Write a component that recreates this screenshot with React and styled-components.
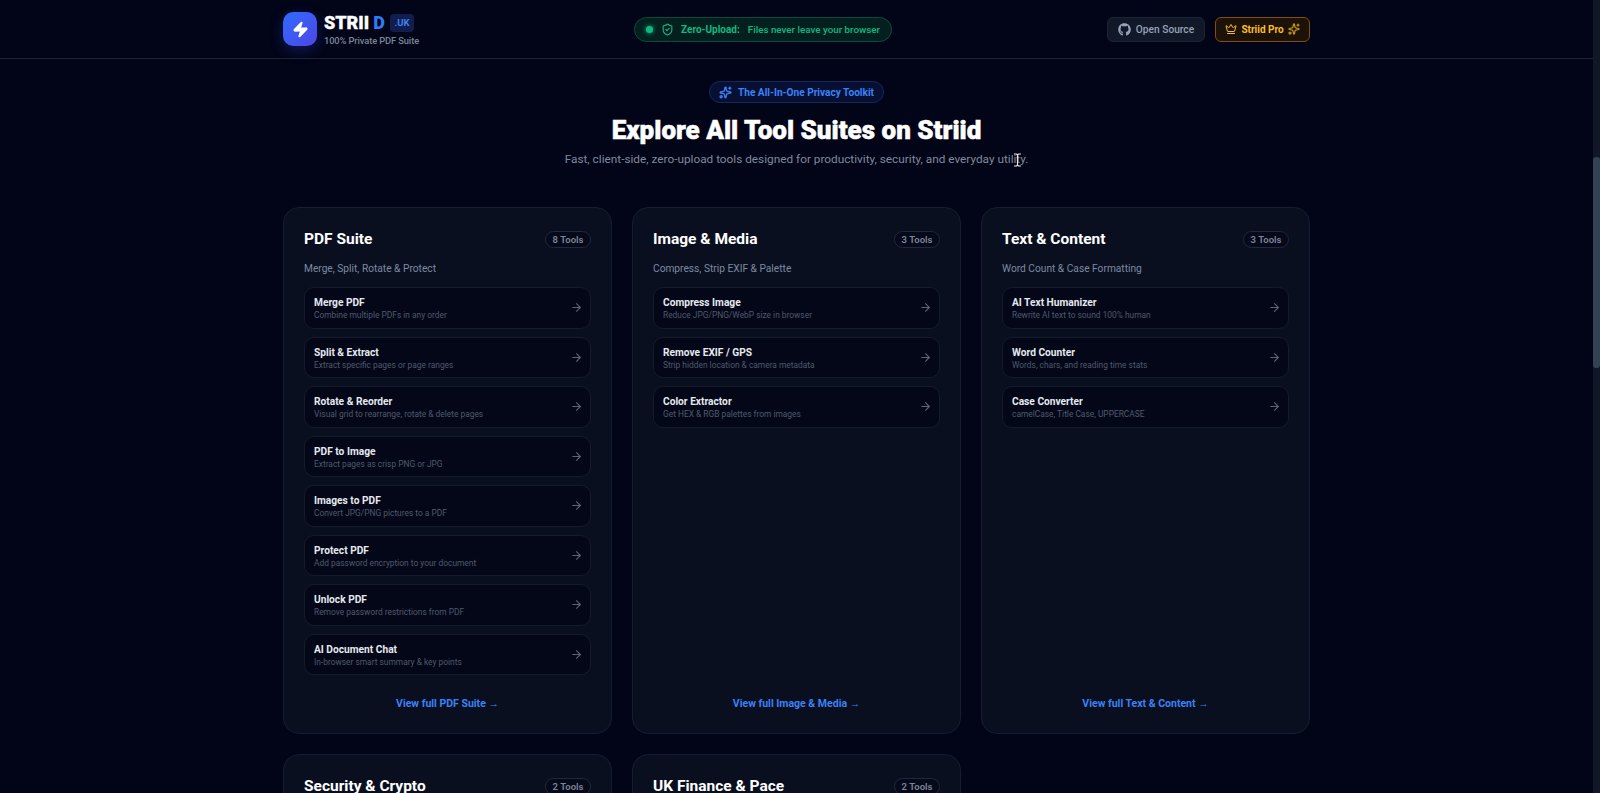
import React from 'react';
import styled, { createGlobalStyle } from 'styled-components';
import { ArrowRight, Crown, ShieldCheck, Sparkles, Zap } from 'lucide-react';
import { FaGithub } from 'react-icons/fa';

const suites = [
  {
    title: 'PDF Suite',
    count: '8 Tools',
    desc: 'Merge, Split, Rotate & Protect',
    link: 'View full PDF Suite →',
    tools: [
      ['Merge PDF', 'Combine multiple PDFs in any order'],
      ['Split & Extract', 'Extract specific pages or page ranges'],
      ['Rotate & Reorder', 'Visual grid to rearrange, rotate & delete pages'],
      ['PDF to Image', 'Extract pages as crisp PNG or JPG'],
      ['Images to PDF', 'Convert JPG/PNG pictures to a PDF'],
      ['Protect PDF', 'Add password encryption to your document'],
      ['Unlock PDF', 'Remove password restrictions from PDF'],
      ['AI Document Chat', 'In-browser smart summary & key points'],
    ],
  },
  {
    title: 'Image & Media',
    count: '3 Tools',
    desc: 'Compress, Strip EXIF & Palette',
    link: 'View full Image & Media →',
    tools: [
      ['Compress Image', 'Reduce JPG/PNG/WebP size in browser'],
      ['Remove EXIF / GPS', 'Strip hidden location & camera metadata'],
      ['Color Extractor', 'Get HEX & RGB palettes from images'],
    ],
  },
  {
    title: 'Text & Content',
    count: '3 Tools',
    desc: 'Word Count & Case Formatting',
    link: 'View full Text & Content →',
    tools: [
      ['AI Text Humanizer', 'Rewrite AI text to sound 100% human'],
      ['Word Counter', 'Words, chars, and reading time stats'],
      ['Case Converter', 'camelCase, Title Case, UPPERCASE'],
    ],
  },
];

const lowerSuites = [
  { title: 'Security & Crypto', count: '2 Tools' },
  { title: 'UK Finance & Pace', count: '2 Tools' },
];

const GlobalStyle = createGlobalStyle`
  html, body {
    margin: 0;
    height: 100%;
    overflow: hidden;
    background: #020417;
  }
  body {
    font-family: Roboto, "Noto Sans", Arial, sans-serif;
    color: #fff;
  }
`;

const Shell = styled.div`
  display: flex;
  height: 793px;
  overflow: hidden;
`;

const Page = styled.div`
  flex: 1;
  min-width: 0;
  height: 793px;
  overflow: hidden;
`;

const ScrollTrack = styled.div`
  width: 7px;
  flex: none;
  background: #111726;
  padding-top: 157px;
`;

const ScrollThumb = styled.div`
  height: 211px;
  border-radius: 3px;
  background: #334155;
`;

const Header = styled.header`
  height: 59px;
  box-sizing: border-box;
  border-bottom: 1px solid #1c2133;
  display: flex;
  justify-content: center;
`;

const HeaderInner = styled.div`
  width: 1027px;
  display: flex;
  justify-content: space-between;
  align-items: center;
`;

const Brand = styled.div`
  display: flex;
  align-items: center;
  gap: 7px;
`;

const LogoMark = styled.div`
  width: 34px;
  height: 34px;
  border-radius: 10px;
  background: linear-gradient(135deg, #2f6bff, #4f46e5);
  box-shadow: 0 4px 14px rgba(47, 84, 235, 0.3);
  display: flex;
  align-items: center;
  justify-content: center;
  color: #fff;
`;

const BrandText = styled.div`
  display: flex;
  flex-direction: column;
  gap: 3px;
  padding-top: 2px;
`;

const BrandRow = styled.div`
  display: flex;
  align-items: center;
  height: 19px;
`;

const BrandName = styled.span`
  font-size: 18px;
  font-weight: 900;
  line-height: 19px;
  color: #fff;
  -webkit-text-stroke: 0.3px #fff;
`;

const BrandAccent = styled.span`
  font-size: 18px;
  font-weight: 900;
  line-height: 19px;
  color: #2f7bf6;
  margin-left: 4px;
`;

const TldBadge = styled.span`
  margin-left: 5px;
  width: 24px;
  height: 18px;
  border-radius: 4px;
  background: #111d4d;
  color: #3b82f6;
  font-size: 9.5px;
  font-weight: 700;
  display: flex;
  align-items: center;
  justify-content: center;
`;

const BrandSub = styled.span`
  font-size: 9.3px;
  font-weight: 500;
  line-height: 12px;
  letter-spacing: -0.1px;
  color: #7c8698;
`;

const PrivacyPill = styled.div`
  height: 25px;
  width: 258px;
  box-sizing: border-box;
  padding-left: 11px;
  border: 1px solid #064e3b;
  border-radius: 13px;
  background: #03201f;
  display: flex;
  align-items: center;
  gap: 7px;
  font-size: 10px;
  font-weight: 500;
  color: #10b981;
  white-space: nowrap;
`;

const Dot = styled.span`
  width: 7px;
  height: 7px;
  border-radius: 50%;
  background: #10b981;
  box-shadow: 0 0 5px #10b981;
  margin-right: 1px;
`;

const PillStrong = styled.strong`
  font-weight: 700;
  margin-right: 1px;
`;

const PillNote = styled.span`
  font-size: 9.8px;
`;

const Actions = styled.div`
  display: flex;
  justify-content: flex-end;
  gap: 10px;
`;

const SourceButton = styled.button`
  height: 25px;
  width: 98px;
  padding: 0;
  border: 1px solid #1a2436;
  border-radius: 6px;
  background: #111827;
  color: #94a3b8;
  font: 500 10.2px Roboto, sans-serif;
  display: flex;
  align-items: center;
  justify-content: center;
  gap: 5px;
`;

const ProButton = styled(SourceButton)`
  width: 95px;
  border-color: #854d0e;
  background: #1c1208;
  color: #fbbf24;
  font-size: 10px;
  font-weight: 700;
  gap: 4px;
`;

const ProSpark = styled(Sparkles)`
  opacity: 0.75;
`;

const Main = styled.main`
  width: 1027px;
  margin: 0 auto;
`;

const Hero = styled.section`
  display: flex;
  flex-direction: column;
  align-items: center;
  padding-top: 22px;
`;

const Eyebrow = styled.div`
  height: 22px;
  width: 175px;
  box-sizing: border-box;
  padding-left: 9px;
  border: 1px solid #14285c;
  border-radius: 11px;
  background: #071033;
  color: #3b82f6;
  font-size: 10.1px;
  font-weight: 700;
  white-space: nowrap;
  display: flex;
  align-items: center;
  gap: 6px;
`;

const HeroTitle = styled.h1`
  margin: 11px 0 0;
  font-size: 26px;
  font-weight: 900;
  line-height: 32px;
  color: #fff;
  -webkit-text-stroke: 0.5px #fff;
`;

const HeroSub = styled.p`
  position: relative;
  margin: 4px 0 0;
  font-size: 11.8px;
  line-height: 18px;
  color: #7f8a9e;
`;

const TextCursor = styled.svg`
  position: absolute;
  right: 6px;
  top: 3px;
`;

const Grid = styled.div`
  display: grid;
  grid-template-columns: repeat(3, 1fr);
  gap: 20px;
  margin-top: 39px;
`;

const Card = styled.article`
  box-sizing: border-box;
  height: ${p => (p.$open ? '100px' : '527px')};
  padding: 20px;
  border: 1px solid #161d30;
  border-radius: 16px;
  background: #0a0f20;
  display: flex;
  flex-direction: column;
`;

const CardHead = styled.div`
  display: flex;
  align-items: center;
  justify-content: space-between;
  height: 24px;
  margin-top: -1px;
`;

const CardTitle = styled.h2`
  margin: 0;
  font-size: 15.5px;
  font-weight: 700;
  color: #fff;
`;

const CountBadge = styled.span`
  height: 17px;
  width: 46px;
  box-sizing: border-box;
  border: 1px solid #1e293b;
  border-radius: 9px;
  background: #050919;
  color: #7c8698;
  font-size: 9.5px;
  font-weight: 600;
  display: flex;
  align-items: center;
  justify-content: center;
`;

const CardDesc = styled.p`
  margin: 11px 0 0;
  font-size: 10.2px;
  line-height: 14px;
  color: #7c8aa0;
`;

const ToolList = styled.ul`
  list-style: none;
  margin: 11px 0 0;
  padding: 0;
  display: flex;
  flex-direction: column;
  gap: 8px;
  flex: 1;
`;

const ToolRow = styled.li`
  height: 41.5px;
  box-sizing: border-box;
  padding: 3px 9px 0;
  border: 1px solid #141b2d;
  border-radius: 10px;
  background: #040717;
  display: flex;
  align-items: center;
  justify-content: space-between;
`;

const ToolText = styled.div`
  display: flex;
  flex-direction: column;
  gap: 1px;
`;

const ToolName = styled.span`
  font-size: 10.2px;
  font-weight: 700;
  line-height: 12px;
  color: #e5e9f0;
`;

const ToolDesc = styled.span`
  font-size: 8.4px;
  line-height: 11px;
  color: #4f5a6e;
`;

const ToolArrow = styled(ArrowRight)`
  color: #5b6577;
  margin: -3px -2px 0 0;
`;

const CardLink = styled.a`
  display: block;
  text-align: center;
  font-size: 10.5px;
  font-weight: 700;
  line-height: 14px;
  color: #3b82f6;
  margin-bottom: 2px;
`;

export default function App() {
  return (
    <Shell>
      <GlobalStyle />
      <Page>
        <Header>
          <HeaderInner>
            <Brand>
              <LogoMark>
                <Zap size={17} fill="#fff" strokeWidth={2} />
              </LogoMark>
              <BrandText>
                <BrandRow>
                  <BrandName>STRII</BrandName>
                  <BrandAccent>D</BrandAccent>
                  <TldBadge>.UK</TldBadge>
                </BrandRow>
                <BrandSub>100% Private PDF Suite</BrandSub>
              </BrandText>
            </Brand>
            <PrivacyPill>
              <Dot />
              <ShieldCheck size={13} />
              <PillStrong>Zero-Upload:</PillStrong>
              <PillNote>Files never leave your browser</PillNote>
            </PrivacyPill>
            <Actions>
              <SourceButton>
                <FaGithub size={13} />
                Open Source
              </SourceButton>
              <ProButton>
                <Crown size={12} />
                Striid Pro
                <ProSpark size={12} strokeWidth={2.5} />
              </ProButton>
            </Actions>
          </HeaderInner>
        </Header>
        <Main>
          <Hero>
            <Eyebrow>
              <Sparkles size={13} strokeWidth={2.5} />
              The All-In-One Privacy Toolkit
            </Eyebrow>
            <HeroTitle>Explore All Tool Suites on Striid</HeroTitle>
            <HeroSub>
              Fast, client-side, zero-upload tools designed for productivity, security, and everyday utility.
              <TextCursor width="9" height="14" viewBox="0 0 9 14">
                <path d="M1 1h2.5l1 1 1-1H8M4.5 2v10M1 13h2.5l1-1 1 1H8" fill="none" stroke="#e8e8e8" strokeWidth="1.2" />
              </TextCursor>
            </HeroSub>
          </Hero>
          <Grid>
            {suites.map(s => (
              <Card key={s.title}>
                <CardHead>
                  <CardTitle>{s.title}</CardTitle>
                  <CountBadge>{s.count}</CountBadge>
                </CardHead>
                <CardDesc>{s.desc}</CardDesc>
                <ToolList>
                  {s.tools.map(([name, desc]) => (
                    <ToolRow key={name}>
                      <ToolText>
                        <ToolName>{name}</ToolName>
                        <ToolDesc>{desc}</ToolDesc>
                      </ToolText>
                      <ToolArrow size={13} />
                    </ToolRow>
                  ))}
                </ToolList>
                <CardLink>{s.link}</CardLink>
              </Card>
            ))}
            {lowerSuites.map(s => (
              <Card key={s.title} $open>
                <CardHead>
                  <CardTitle>{s.title}</CardTitle>
                  <CountBadge>{s.count}</CountBadge>
                </CardHead>
              </Card>
            ))}
          </Grid>
        </Main>
      </Page>
      <ScrollTrack>
        <ScrollThumb />
      </ScrollTrack>
    </Shell>
  );
}
